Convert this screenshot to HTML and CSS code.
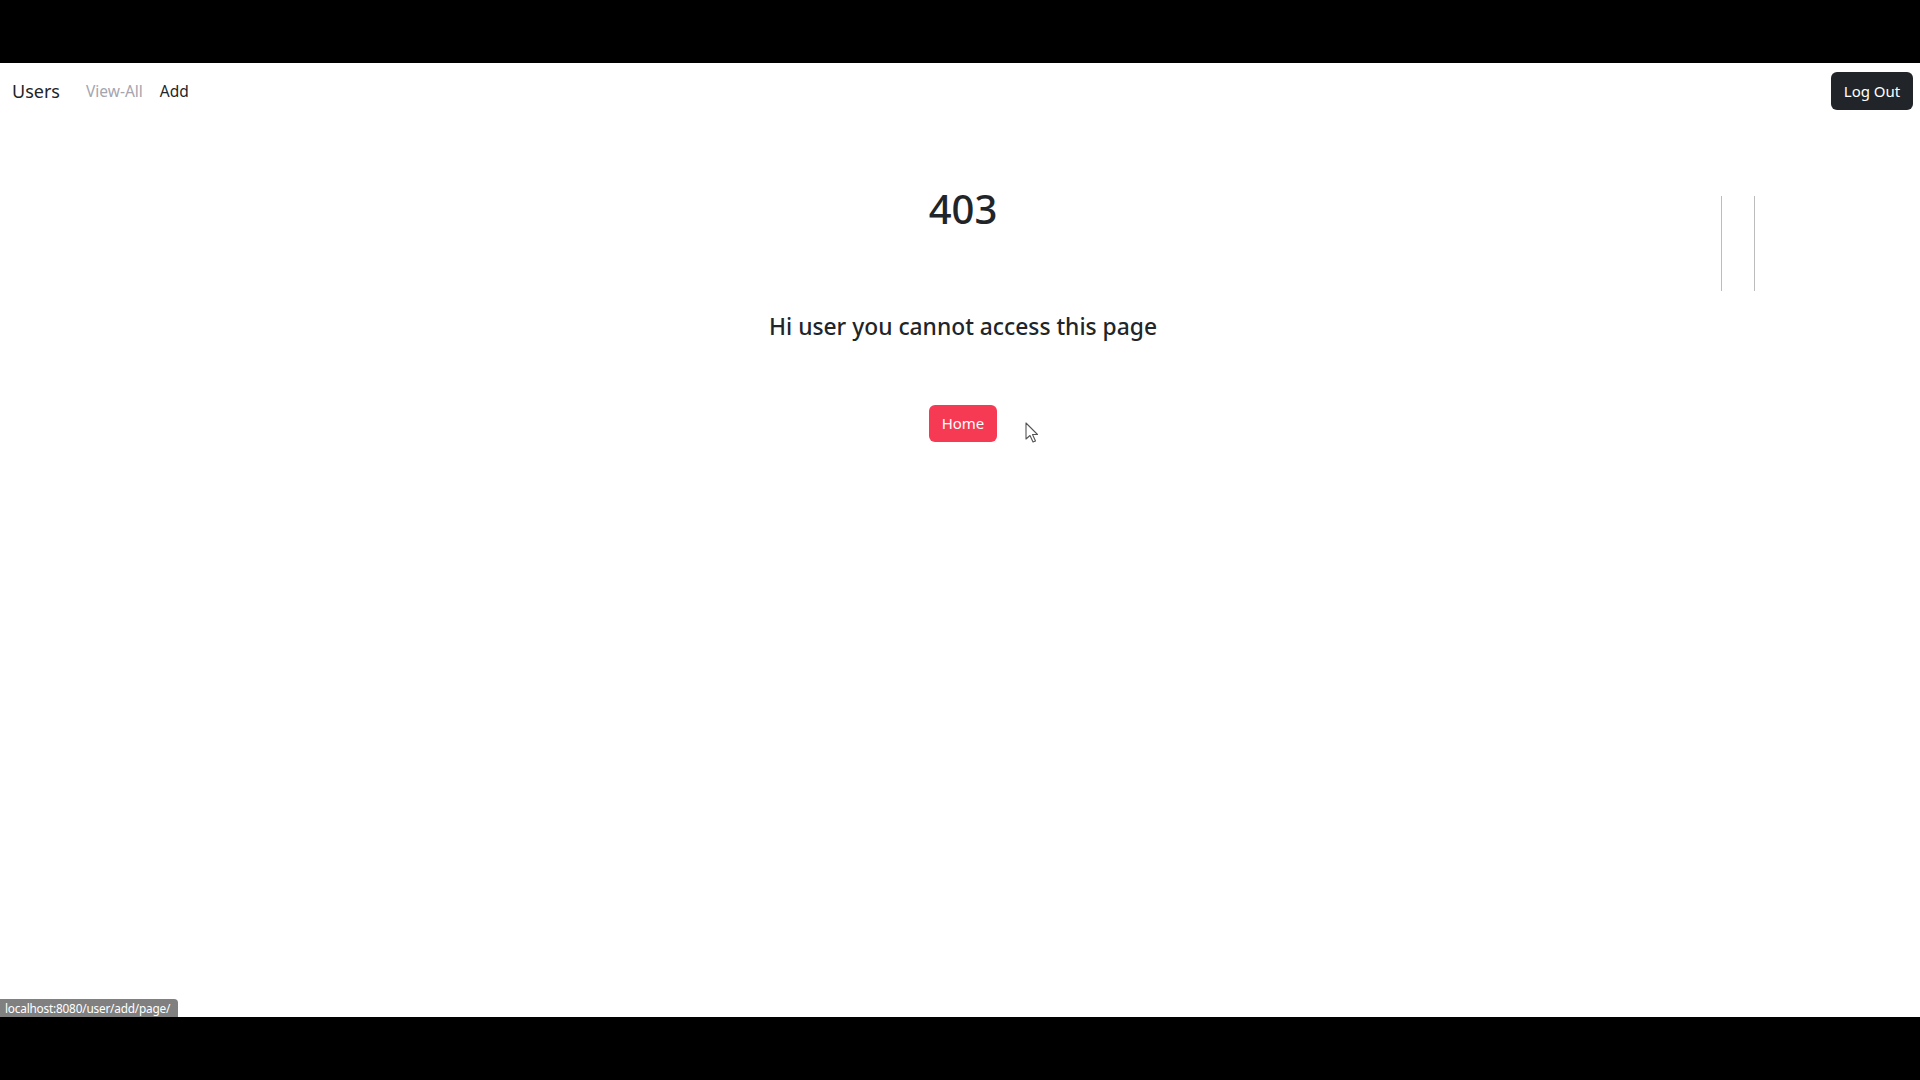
FILE: index.html
```html
<!DOCTYPE html>
<html lang="en">
<head>
<meta charset="utf-8">
<title>403</title>
<link rel="stylesheet" href="styles.css">
</head>
<body>
<div class="frame">
  <div class="page">
    <nav class="navbar">
      <div class="nav-left">
        <a class="brand" href="#">Users</a>
        <a class="nav-link muted" href="#">View-All</a>
        <a class="nav-link" href="#">Add</a>
      </div>
      <button class="btn-dark">Log Out</button>
    </nav>
    <main class="content">
      <h1 class="code">403</h1>
      <h4 class="msg">Hi user you cannot access this page</h4>
      <a class="btn-home" href="#">Home</a>
    </main>
    <div class="vlines"><span></span><span></span></div>
    <svg class="cursor" width="16" height="22" viewBox="0 0 16 22">
      <path d="M1 1 L1 17 L5 13.5 L8 20 L10.5 19 L7.5 12.5 L12.5 12.5 Z" fill="#fff" stroke="#555" stroke-width="1.1" stroke-linejoin="round"/>
    </svg>
    <div class="status">localhost:8080/user/add/page/</div>
  </div>
</div>
</body>
</html>
```
FILE: styles.css
```css
html, body {
  margin: 0;
  padding: 0;
  background: #000;
}
.frame {
  width: 1920px;
  height: 1080px;
  padding: 63px 0;
  box-sizing: border-box;
}
.page {
  position: relative;
  height: 954px;
  background: #fff;
  font-family: "Noto Sans", "Open Sans", sans-serif;
  color: #212529;
}
.navbar {
  display: flex;
  align-items: center;
  justify-content: space-between;
  padding: 9px 7px 8px 12px;
}
.nav-left {
  display: flex;
  align-items: center;
}
.brand {
  font-size: 18px;
  color: #212529;
  text-decoration: none;
  margin-right: 26px;
}
.nav-link {
  font-size: 15.5px;
  color: #212529;
  text-decoration: none;
  margin-right: 17px;
}
.nav-link.muted {
  color: #a5a5b0;
}
.btn-dark {
  background: #212529;
  color: #fff;
  border: none;
  border-radius: 6px;
  font-family: inherit;
  font-size: 15px;
  height: 38px;
  width: 82px;
  padding: 0;
}
.content {
  display: flex;
  flex-direction: column;
  align-items: center;
  padding-left: 6px;
}
.code {
  margin: 67px 0 0;
  font-size: 40px;
  font-weight: 500;
  line-height: 48px;
}
.msg {
  margin: 79px 0 0;
  font-size: 22.8px;
  font-weight: 500;
  line-height: 29px;
}
.btn-home {
  margin-top: 64px;
  display: block;
  width: 68px;
  height: 37px;
  line-height: 37px;
  text-align: center;
  background: #f73a53;
  color: #fff;
  border-radius: 6px;
  font-size: 15px;
  text-decoration: none;
}
.vlines {
  position: absolute;
  left: 1721px;
  top: 133px;
  width: 34px;
  height: 95px;
  display: flex;
  justify-content: space-between;
}
.vlines span {
  width: 1px;
  background: #bcbcbc;
}
.cursor {
  position: absolute;
  left: 1025px;
  top: 359px;
}
.status {
  position: absolute;
  left: 0;
  bottom: 0;
  height: 18px;
  line-height: 18px;
  padding: 0 8px 0 5px;
  background: #808080;
  color: #fff;
  font-size: 11.8px;
  letter-spacing: -0.2px;
  border-top-right-radius: 4px;
  white-space: nowrap;
}
```
